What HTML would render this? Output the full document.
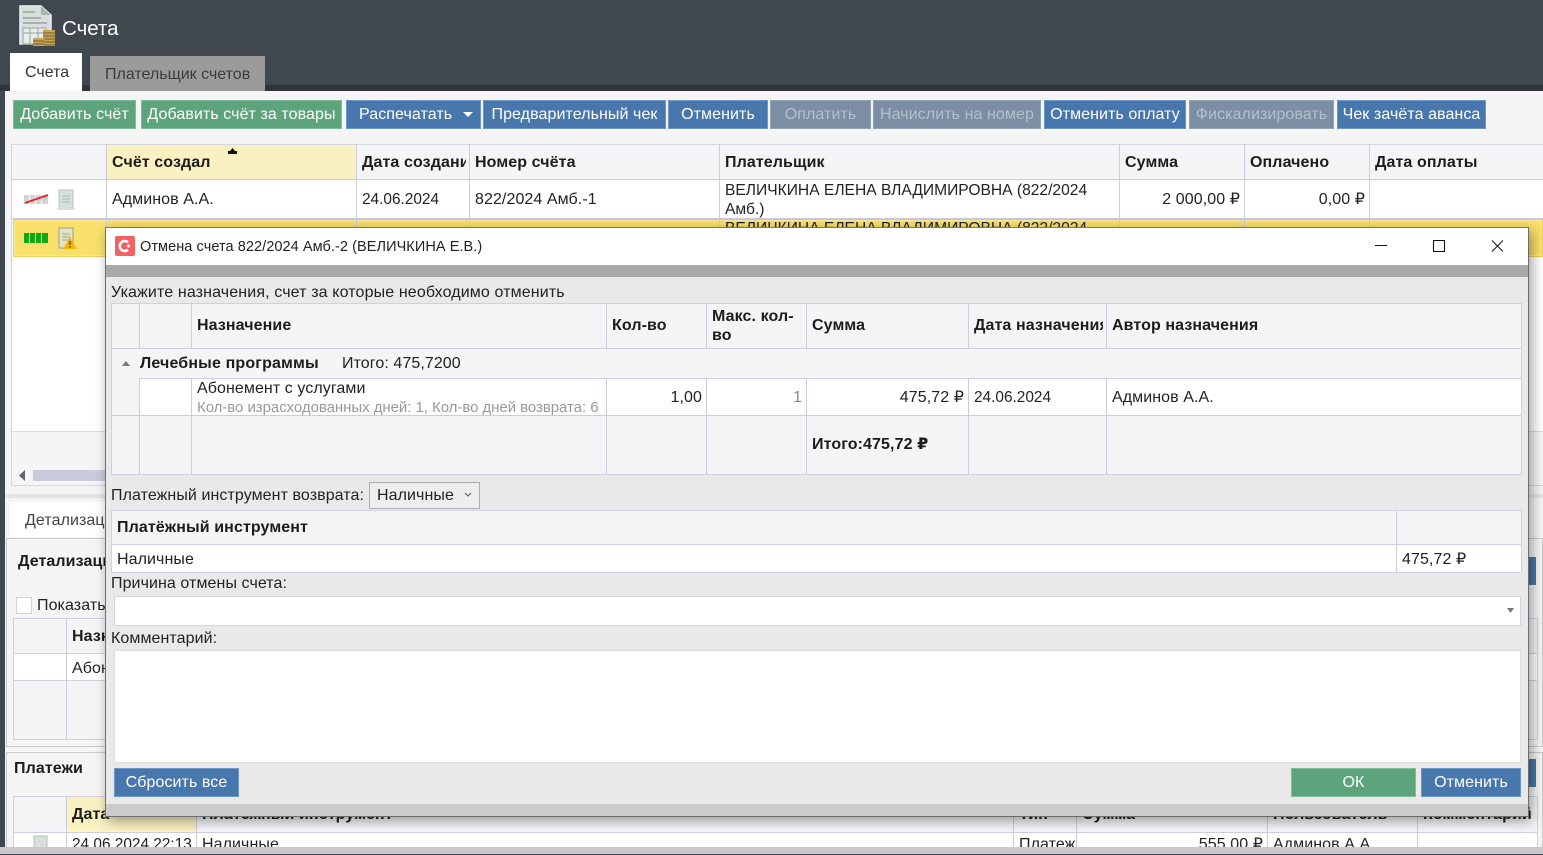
<!DOCTYPE html>
<html lang="ru"><head><meta charset="utf-8"><title>Счета</title>
<style>
html,body{margin:0;padding:0}
body{width:1543px;height:854px;position:relative;overflow:hidden;background:#40474f;font-family:"Liberation Sans","DejaVu Sans",sans-serif;font-size:16px;color:#222;letter-spacing:.08px}
div,svg{position:absolute;box-sizing:border-box}
.t{white-space:nowrap;line-height:20px;margin-top:1px}
.b{font-weight:bold;color:#1c1c1c;letter-spacing:.1px}
.btn{top:100px;height:29px;color:#fff;text-align:center;line-height:28px;border:1px solid;outline:none;white-space:nowrap;overflow:hidden}
.g{background:#5da37c;border-color:#7fbc99;box-shadow:inset 0 0 0 1px #5da37c}
.bl{background:#4877ad;border-color:#6d97c6}
.d{background:#7b8ea4;border-color:#93a3b6;color:#b4bfcb}
.hl{background:#ccccdf}
.r{text-align:right}
.dt{font-size:15.4px;letter-spacing:0}
.ic{filter:blur(.35px)}
</style></head><body>

<!-- header -->
<div style="left:0;top:85px;width:1543px;height:6px;background:#2f3438"></div>
<svg class="ic" style="left:19px;top:5px" width="37" height="42" viewBox="0 0 37 42">
<path d="M1 1H22L32 10V39H1Z" fill="#d8dedb" stroke="#eef1f0" stroke-width="1.5"/>
<path d="M22 1V10H32Z" fill="#aab5b1"/>
<path d="M4 7h12M4 13h18M4 18h24" stroke="#98a4a0" stroke-width="1.4"/>
<path d="M4 23H27V39H4ZM4 28H27M11 23V39M19 23V39" fill="#e8eceb" stroke="#97a5a2"/>
<path d="M24 25H36V41H24Z" fill="#c4a35b"/><path d="M24 28h12M24 31h12M24 34h12M24 37h12M24 40h12" stroke="#7b5f25"/>
<path d="M14 33H25V41H14Z" fill="#c4a35b"/><path d="M14 36h11M14 39h11" stroke="#7b5f25"/>
</svg>
<div class="t" style="left:62px;top:16px;font-size:20.5px;line-height:24px;color:#fff;letter-spacing:0">Счета</div>
<div style="left:10px;top:53px;width:72px;height:38px;background:#fff"></div>
<div class="t" style="left:25px;top:62px;color:#333;letter-spacing:0">Счета</div>
<div style="left:90px;top:56px;width:175px;height:35px;background:#9b9b9b"></div>
<div class="t" style="left:105px;top:64px;color:#3b3b3b;letter-spacing:0">Плательщик счетов</div>

<!-- main panel -->
<div style="left:5px;top:91px;width:1538px;height:763px;background:#f5f5f5"></div>
<div class="btn g" style="left:13px;width:123px">Добавить счёт</div>
<div class="btn g" style="left:141px;width:201px">Добавить счёт за товары</div>
<div class="btn bl" style="left:346px;width:135px;text-align:left;padding-left:12px">Распечатать</div>
<svg style="left:463px;top:112px" width="10" height="6"><path d="M0 0H10L5 5Z" fill="#fff"/></svg>
<div class="btn bl" style="left:483px;width:183px">Предварительный чек</div>
<div class="btn bl" style="left:668px;width:100px">Отменить</div>
<div class="btn d" style="left:770px;width:101px">Оплатить</div>
<div class="btn d" style="left:873px;width:168px">Начислить на номер</div>
<div class="btn bl" style="left:1044px;width:142px">Отменить оплату</div>
<div class="btn d" style="left:1189px;width:145px">Фискализировать</div>
<div class="btn bl" style="left:1337px;width:149px">Чек зачёта аванса</div>

<!-- main grid -->
<div style="left:11px;top:144px;width:1532px;height:342px;background:#fff;border:1px solid #d4d4e2;border-right:0"></div>
<div style="left:12px;top:145px;width:1531px;height:34px;background:#f5f5f7"></div>
<div style="left:107px;top:145px;width:249px;height:34px;background:#faf1c2"></div>
<div class="hl" style="left:11px;top:179px;width:1532px;height:1px"></div>
<div class="hl" style="left:11px;top:218px;width:1532px;height:1px"></div>
<div style="left:13px;top:219px;width:1530px;height:38px;background:#f9e06b;border:1px solid #efc95a;box-shadow:inset 0 0 0 1px #fbeb9d"></div>
<div style="left:12px;top:431px;width:1531px;height:54px;background:#f5f5f5;border-top:1px solid #dcdce6"></div>
<div class="hl" style="left:106px;top:144px;width:1px;height:112px"></div>
<div class="hl" style="left:356px;top:144px;width:1px;height:112px"></div>
<div class="hl" style="left:469px;top:144px;width:1px;height:112px"></div>
<div class="hl" style="left:719px;top:144px;width:1px;height:112px"></div>
<div class="hl" style="left:1119px;top:144px;width:1px;height:112px"></div>
<div class="hl" style="left:1244px;top:144px;width:1px;height:112px"></div>
<div class="hl" style="left:1369px;top:144px;width:1px;height:112px"></div>
<svg style="left:227px;top:148px" width="11" height="8"><path d="M3 3L5.5 0L8 3H10V6H1V3Z" fill="#111"/></svg>
<div class="t b" style="left:112px;top:152px">Счёт создал</div>
<div class="t b" style="left:362px;top:152px;width:104px;overflow:hidden">Дата создания</div>
<div class="t b" style="left:475px;top:152px">Номер счёта</div>
<div class="t b" style="left:725px;top:152px">Плательщик</div>
<div class="t b" style="left:1125px;top:152px">Сумма</div>
<div class="t b" style="left:1250px;top:152px">Оплачено</div>
<div class="t b" style="left:1375px;top:152px">Дата оплаты</div>
<svg class="ic" style="left:24px;top:193px" width="25" height="13"><path d="M0 2h5v9H0zM6 2h5v9H6zM12 2h5v9h-5zM18 2h6v9h-6z" fill="#d3d3d3"/><path d="M1 10L24 2" stroke="#e5222c" stroke-width="1.8"/></svg>
<svg class="ic" style="left:57px;top:189px" width="19" height="22"><path d="M2 1H16V20H2Z" fill="#d7e0dd" stroke="#b6c4c0"/><path d="M5 7H13M5 10H13M5 13H13" stroke="#a8b8b3"/><path d="M0 20H18" stroke="#ddd" stroke-width="2"/></svg>
<div class="t" style="left:112px;top:189px">Админов А.А.</div>
<div class="t dt" style="left:362px;top:189px">24.06.2024</div>
<div class="t" style="left:475px;top:189px">822/2024 Амб.-1</div>
<div class="t" style="left:725px;top:180px;line-height:19px;width:390px;white-space:normal;font-size:15.6px;letter-spacing:0">ВЕЛИЧКИНА ЕЛЕНА ВЛАДИМИРОВНА (822/2024 Амб.)</div>
<div class="t r" style="left:1120px;width:120px;top:189px">2 000,00 ₽</div>
<div class="t r" style="left:1245px;width:120px;top:189px">0,00 ₽</div>
<svg class="ic" style="left:24px;top:233px" width="25" height="11"><path d="M0 0h5v10H0zM6 0h5v10H6zM12 0h5v10h-5zM18 0h6v10h-6z" fill="#12a812"/></svg>
<svg class="ic" style="left:57px;top:227px" width="21" height="23"><path d="M2 1H16V21H2Z" fill="#e4e4c8" stroke="#9a9f80"/><path d="M5 7H13M5 10H13M5 13H13" stroke="#9fa58e"/><path d="M13 10L20 22H6Z" fill="#f5b400"/><path d="M13 14V18M13 19V21" stroke="#6b4d00" stroke-width="1.4"/></svg>
<div style="left:725px;top:219px;width:390px;height:9px;overflow:hidden"><div class="t" style="left:0;top:0;line-height:19px;margin-top:0;font-size:15.6px;letter-spacing:0">ВЕЛИЧКИНА ЕЛЕНА ВЛАДИМИРОВНА (822/2024</div></div>
<svg style="left:18px;top:470px" width="9" height="12"><path d="M7 0V11L1 5.5Z" fill="#5d6670"/></svg>
<div style="left:33px;top:470px;width:80px;height:11px;background:#c9cbdc"></div>

<!-- lower panels -->
<div style="left:5px;top:494px;width:1538px;height:4px;background:#e4e4e4"></div>
<div style="left:10px;top:502px;width:100px;height:35px;background:#fff"></div>
<div class="t" style="left:25px;top:510px;color:#444">Детализация</div>
<div style="left:6px;top:538px;width:1537px;height:209px;border:1px solid #c9c9c9;background:#f5f5f5"></div>
<div class="t b" style="left:18px;top:551px">Детализация</div>
<div style="left:16px;top:597px;width:16px;height:17px;background:#fff;border:1px solid #d4d4d4"></div>
<div class="t" style="left:37px;top:595px">Показать</div>
<div style="left:13px;top:618px;width:1525px;height:122px;border:1px solid #d0d0e0;background:#f5f5f5"></div>
<div style="left:14px;top:653px;width:1523px;height:28px;background:#fff;border-top:1px solid #d0d0e0;border-bottom:1px solid #d0d0e0"></div>
<div class="hl" style="left:66px;top:618px;width:1px;height:122px"></div>
<div class="t b" style="left:72px;top:626px">Назначение</div>
<div class="t" style="left:72px;top:658px">Абонемент</div>
<div style="left:1508px;top:557px;width:28px;height:28px;background:#4877ad"></div>

<div style="left:6px;top:752px;width:1537px;height:102px;border:1px solid #c9c9c9;background:#f5f5f5"></div>
<div class="t b" style="left:14px;top:758px">Платежи</div>
<div style="left:1508px;top:759px;width:28px;height:28px;background:#4877ad"></div>
<div style="left:13px;top:796px;width:1525px;height:58px;border:1px solid #d0d0e0;background:#f5f5f7"></div>
<div style="left:67px;top:797px;width:129px;height:34px;background:#faf1c2"></div>
<div style="left:14px;top:832px;width:1523px;height:22px;background:#fff;border-top:1px solid #d0d0e0"></div>
<div class="hl" style="left:66px;top:796px;width:1px;height:58px"></div>
<div class="hl" style="left:196px;top:796px;width:1px;height:58px"></div>
<div class="hl" style="left:1013px;top:796px;width:1px;height:58px"></div>
<div class="hl" style="left:1076px;top:796px;width:1px;height:58px"></div>
<div class="hl" style="left:1267px;top:796px;width:1px;height:58px"></div>
<div class="hl" style="left:1417px;top:796px;width:1px;height:58px"></div>
<div class="t b" style="left:72px;top:804px">Дата</div>
<div class="t b" style="left:202px;top:804px">Платежный инструмент</div>
<div class="t b" style="left:1019px;top:804px">Тип</div>
<div class="t b" style="left:1082px;top:804px">Сумма</div>
<div class="t b" style="left:1273px;top:804px">Пользователь</div>
<div class="t b" style="left:1423px;top:804px">Комментарий</div>
<svg class="ic" style="left:33px;top:835px" width="15" height="14"><path d="M1 1H14V14H1Z" fill="#d7e0dd" stroke="#b6c4c0"/></svg>
<div class="t dt" style="left:72px;top:834px">24.06.2024 22:13</div>
<div class="t" style="left:202px;top:834px">Наличные</div>
<div class="t" style="left:1019px;top:834px">Платеж</div>
<div class="t r" style="left:1080px;width:183px;top:834px">555,00 ₽</div>
<div class="t" style="left:1273px;top:834px">Админов А.А.</div>
<div style="left:0;top:847px;width:1543px;height:7px;background:#c8c8c8"></div>

<!-- modal -->
<div style="left:105px;top:227px;width:1424px;height:590px;background:#e9e9e9;border:1px solid #6e6e6e;border-top-color:#777;box-shadow:3px 4px 12px rgba(0,0,0,.38)"></div>
<div style="left:106px;top:228px;width:1422px;height:37px;background:#fff"></div>
<div style="left:106px;top:265px;width:1422px;height:12px;background:#a9a9a9"></div>
<div style="left:106px;top:804px;width:1422px;height:12px;background:#cbcbcb"></div>
<svg style="left:115px;top:236px" width="20" height="20" viewBox="0 0 20 20"><rect width="20" height="20" rx="2" fill="#f46161"/><path d="M13 6.2A5 5 0 1 0 13 13.8" fill="none" stroke="#fff" stroke-width="2.6"/><circle cx="13.5" cy="10" r="1.6" fill="#fff"/></svg>
<div class="t" style="left:140px;top:236px;font-size:14.5px;letter-spacing:.07px;color:#222">Отмена счета 822/2024 Амб.-2 (ВЕЛИЧКИНА Е.В.)</div>
<svg style="left:1375px;top:240px" width="130" height="14"><path d="M0 5.500H12" stroke="#111"/><path d="M58.500 .5H69.500V11.500H58.500Z" fill="none" stroke="#111" stroke-width="1.1"/><path d="M117 .5L128 11.500M128 .5L117 11.500" stroke="#111"/></svg>

<div class="t" style="left:111px;top:282px;letter-spacing:.13px">Укажите назначения, счет за которые необходимо отменить</div>
<div style="left:111px;top:303px;width:1411px;height:172px;background:#f5f5f5;border:1px solid #d0d0e0"></div>
<div class="hl" style="left:112px;top:348px;width:1409px;height:1px"></div>
<div style="left:112px;top:349px;width:1409px;height:29px;background:#f5f5f5"></div>
<div class="hl" style="left:139px;top:378px;width:1382px;height:1px"></div>
<div style="left:140px;top:379px;width:1381px;height:36px;background:#fff"></div>
<div class="hl" style="left:112px;top:415px;width:1409px;height:1px"></div>
<div class="hl" style="left:139px;top:303px;width:1px;height:45px"></div>
<div class="hl" style="left:191px;top:303px;width:1px;height:45px"></div>
<div class="hl" style="left:606px;top:303px;width:1px;height:45px"></div>
<div class="hl" style="left:706px;top:303px;width:1px;height:45px"></div>
<div class="hl" style="left:806px;top:303px;width:1px;height:45px"></div>
<div class="hl" style="left:968px;top:303px;width:1px;height:45px"></div>
<div class="hl" style="left:1106px;top:303px;width:1px;height:45px"></div>
<div class="hl" style="left:139px;top:378px;width:1px;height:96px"></div>
<div class="hl" style="left:191px;top:378px;width:1px;height:96px"></div>
<div class="hl" style="left:606px;top:378px;width:1px;height:96px"></div>
<div class="hl" style="left:706px;top:378px;width:1px;height:96px"></div>
<div class="hl" style="left:806px;top:378px;width:1px;height:96px"></div>
<div class="hl" style="left:968px;top:378px;width:1px;height:96px"></div>
<div class="hl" style="left:1106px;top:378px;width:1px;height:96px"></div>
<div class="t b" style="left:197px;top:315px">Назначение</div>
<div class="t b" style="left:612px;top:315px">Кол-во</div>
<div class="t b" style="left:712px;top:306px;line-height:19px;white-space:normal;width:92px">Макс. кол-во</div>
<div class="t b" style="left:812px;top:315px">Сумма</div>
<div class="t b" style="left:974px;top:315px;width:129px;overflow:hidden">Дата назначения</div>
<div class="t b" style="left:1112px;top:315px">Автор назначения</div>
<svg style="left:122px;top:360px" width="9" height="7"><path d="M0 6H8L4 1Z" fill="#777"/></svg>
<div class="t b" style="left:140px;top:353px;letter-spacing:.15px">Лечебные программы</div>
<div class="t" style="left:342px;top:353px">Итого: 475,7200</div>
<div class="t" style="left:197px;top:378px">Абонемент с услугами</div>
<div class="t" style="left:197px;top:397px;color:#999;font-size:15px;letter-spacing:-.05px">Кол-во израсходованных дней: 1, Кол-во дней возврата: 6</div>
<div class="t r" style="left:607px;width:95px;top:387px">1,00</div>
<div class="t r" style="left:707px;width:95px;top:387px;color:#888">1</div>
<div class="t r" style="left:807px;width:157px;top:387px">475,72 ₽</div>
<div class="t dt" style="left:974px;top:387px">24.06.2024</div>
<div class="t" style="left:1112px;top:387px">Админов А.А.</div>
<div class="t b" style="left:812px;top:434px">Итого:475,72 ₽</div>

<div class="t" style="left:111px;top:485px">Платежный инструмент возврата:</div>
<div style="left:369px;top:482px;width:111px;height:27px;background:#eee;border:1px solid #acacac"></div>
<div class="t" style="left:377px;top:485px">Наличные</div>
<svg style="left:464px;top:492px" width="8" height="6"><path d="M1 1L4 4L7 1" fill="none" stroke="#666" stroke-width="1.2"/></svg>

<div style="left:111px;top:510px;width:1411px;height:63px;background:#f5f5f5;border:1px solid #d0d0e0"></div>
<div style="left:112px;top:544px;width:1409px;height:28px;background:#fff;border-top:1px solid #d0d0e0"></div>
<div class="hl" style="left:1396px;top:510px;width:1px;height:62px"></div>
<div class="t b" style="left:117px;top:517px">Платёжный инструмент</div>
<div class="t" style="left:117px;top:549px">Наличные</div>
<div class="t" style="left:1402px;top:549px">475,72 ₽</div>

<div class="t" style="left:111px;top:573px">Причина отмены счета:</div>
<div style="left:114px;top:596px;width:1407px;height:30px;background:#fff;border:1px solid #d4d4e2"></div>
<svg style="left:1506px;top:607px" width="9" height="7"><path d="M1 1H8L4.500 6Z" fill="#777"/></svg>
<div class="t" style="left:111px;top:628px">Комментарий:</div>
<div style="left:114px;top:650px;width:1407px;height:113px;background:#fff;border:1px solid #dedede"></div>
<div class="btn bl" style="left:114px;top:768px;width:125px">Сбросить все</div>
<div class="btn g" style="left:1291px;top:768px;width:125px">ОК</div>
<div class="btn bl" style="left:1421px;top:768px;width:100px">Отменить</div>
</body></html>
